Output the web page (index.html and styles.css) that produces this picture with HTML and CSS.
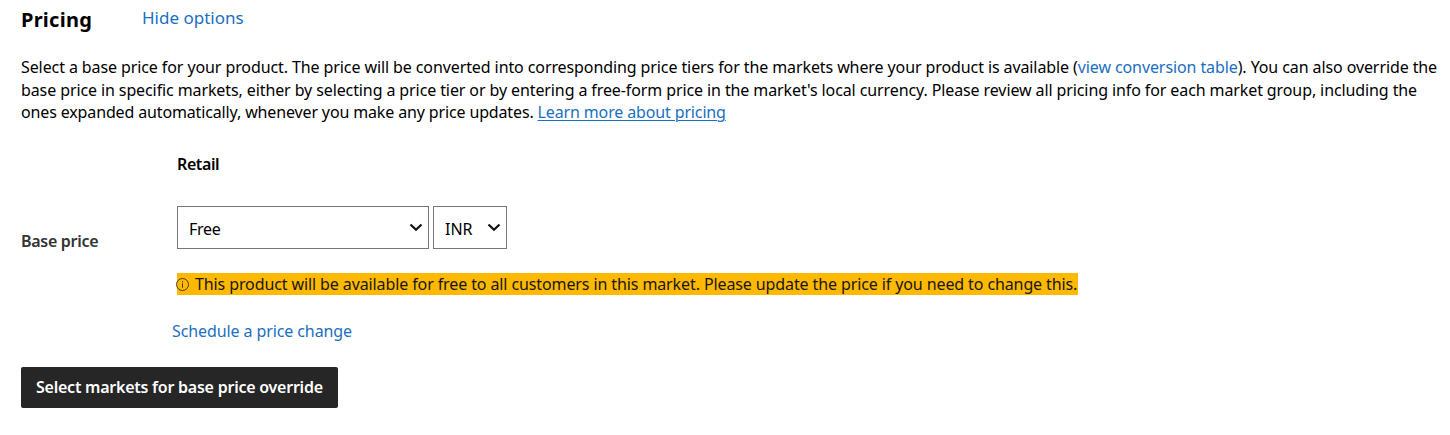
FILE: index.html
```html
<!DOCTYPE html>
<html lang="en">
<head>
<meta charset="utf-8">
<title>Pricing</title>
<link rel="stylesheet" href="styles.css">
</head>
<body>
<main class="pricing">
  <header class="heading">
    <h2 class="title">Pricing</h2>
    <a class="link toggle">Hide options</a>
  </header>
  <p class="intro">
    <span class="line line-1">Select a base price for your product. The price will be converted into corresponding price tiers for the markets where your product is available (<a class="link">view conversion table</a>). You can also override the</span>
    <span class="line line-2">base price in specific markets, either by selecting a price tier or by entering a free-form price in the market's local currency. Please review all pricing info for each market group, including the</span>
    <span class="line line-3">ones expanded automatically, whenever you make any price updates. <a class="link underlined">Learn more about pricing</a></span>
  </p>
  <section class="form">
    <div class="retail">Retail</div>
    <div class="label">Base price</div>
    <div class="fields">
      <div class="select select-price"><span>Free</span><svg class="chevron" width="14" height="9" viewBox="0 0 14 9"><path d="M1.5 1.5 7 6.8 12.5 1.5"/></svg></div>
      <div class="select select-currency"><span>INR</span><svg class="chevron" width="14" height="9" viewBox="0 0 14 9"><path d="M1.5 1.5 7 6.8 12.5 1.5"/></svg></div>
    </div>
  </section>
  <div class="notice"><svg class="info" width="13" height="13" viewBox="0 0 13 13"><circle cx="6.5" cy="6.5" r="6"/><path d="M6.5 5.3V9.8M6.5 3.2V4.3"/></svg><span class="notice-text">This product will be available for free to all customers in this market. Please update the price if you need to change this.</span></div>
  <a class="link schedule">Schedule a price change</a>
  <button class="button">Select markets for base price override</button>
</main>
</body>
</html>
```
FILE: styles.css
```css
* { box-sizing: border-box; }
body {
  margin: 0;
  background: #fff;
  color: #000;
  font: 16px/22.5px "Noto Sans", "Open Sans", sans-serif;
  white-space: nowrap;
}
.pricing { display: flex; flex-direction: column; align-items: flex-start; padding: 7px 0 0 21px; }
.link { color: #1a6fc0; text-decoration: none; }
.underlined { text-decoration: underline; text-underline-offset: 2px; text-decoration-thickness: 1px; }
.heading { display: flex; height: 49px; }
.title { margin: 0; width: 121px; font-size: 20px; line-height: 25px; font-weight: 700; letter-spacing: 0.25px; }
.toggle { font-size: 17px; line-height: 22px; }
.intro { margin: 0; height: 68px; }
.line { display: block; }
.line-1 { letter-spacing: -0.098px; }
.line-2 { letter-spacing: -0.104px; }
.line-3 { letter-spacing: -0.14px; }
.form { display: grid; grid-template-columns: 156px auto; margin-top: 29px; }
.retail { grid-column: 2; height: 53px; font-weight: 600; letter-spacing: -0.4px; }
.label { padding-top: 24px; font-weight: 600; color: #333; letter-spacing: -0.29px; }
.fields { display: flex; gap: 4px; height: 43px; }
.select { display: flex; align-items: center; justify-content: space-between; height: 43px; padding: 3px 5px 0 11px; border: 1px solid #767676; }
.select-price { width: 252px; letter-spacing: -0.3px; }
.select-currency { width: 74px; }
.chevron { flex: none; margin-top: -3px; fill: none; stroke: #111; stroke-width: 2.2; }
.notice { display: flex; align-items: center; gap: 6px; width: 901px; height: 22px; margin: 20px 0 0 156px; background: #ffb900; color: #171717; letter-spacing: -0.107px; }
.info { flex: none; margin: 2px 0 0 -1px; fill: none; stroke: #3a2a00; stroke-width: 0.9; }
.notice-text { padding-top: 2px; }
.schedule { margin: 25px 0 0 151px; letter-spacing: -0.1px; }
.button { width: 317px; height: 41px; margin-top: 25px; padding: 0 0 0 15px; border: 0; border-radius: 2px; background: #262626; color: #fff; font: inherit; font-weight: 600; letter-spacing: -0.24px; text-align: left; }
```
